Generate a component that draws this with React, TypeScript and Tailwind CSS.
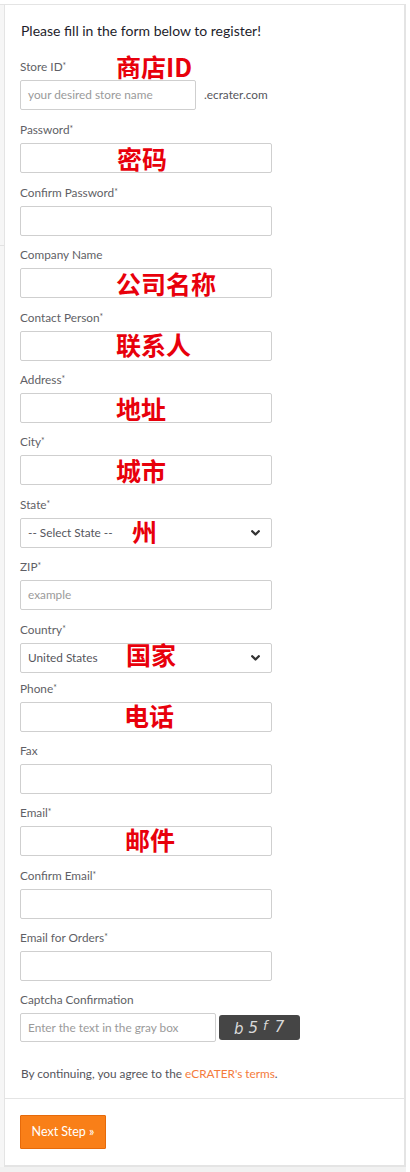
import React from "react";

type FieldProps = {
  label: string;
  req?: boolean;
  children: React.ReactNode;
  last?: string;
};

function Field({ label, req, children, last }: FieldProps) {
  return (
    <div className={last ?? "mb-[11.4px]"}>
      <div className="h-[16px] leading-[16px] text-[11.8px] text-[#5f5f66]">
        {label}
        {req ? <span className="align-top text-[8.5px] leading-[14px]">*</span> : null}
      </div>
      <div className="mt-[5px] relative">{children}</div>
    </div>
  );
}

function Note({ text, left, top }: { text: string; left: number; top: number }) {
  return (
    <span
      className="absolute z-10 whitespace-nowrap font-['Noto_Sans_CJK_SC',sans-serif] font-bold text-[25px] leading-none text-[#e8000b] pointer-events-none"
      style={{ left, top }}
    >
      {text}
    </span>
  );
}

function Input({ placeholder, w = "w-[252px]" }: { placeholder?: string; w?: string }) {
  return (
    <div
      className={`${w} h-[30px] border border-[#cfcfcf] rounded-[2px] bg-white flex items-center pl-[7px] text-[11.8px] text-[#9a9a9a]`}
    >
      {placeholder}
    </div>
  );
}

function Select({ value }: { value: string }) {
  return (
    <div className="w-[252px] h-[30px] border border-[#cfcfcf] rounded-[2px] bg-white flex items-center justify-between pl-[7px] pr-[11px] text-[11.8px] text-[#55555c]">
      <span>{value}</span>
      <svg width="9" height="6" viewBox="0 0 9 6">
        <path d="M1.2 1.2 L4.5 4.5 L7.8 1.2" fill="none" stroke="#333" strokeWidth="2.3" strokeLinecap="round" strokeLinejoin="round" />
      </svg>
    </div>
  );
}

export default function App() {
  return (
    <div className="w-[410px] h-[1172px] bg-white font-['Lato','Liberation_Sans',sans-serif] overflow-hidden">
      <div className="h-[4px]" />
      <div className="w-[406px] border-t border-[#e4e4e4] flex">
        <div className="w-[4px] bg-[#f6f6f6] flex flex-col">
          <div className="h-[240px]" />
          <div className="border-t border-[#e2e2e2]" />
        </div>
        <div className="w-[402px] bg-white border-l border-r-2 border-b-2 border-[#e4e4e4]">
          <div className="pt-[17px] pl-[15px] pr-[15px]">
            <div className="h-[18px] leading-[18px] text-[14px] text-[#1e1d2b] pl-[1px]">
              Please fill in the form below to register!
            </div>
            <div className="mt-[19px]">
              <Field label="Store ID" req last="mb-[12.4px]">
                <div className="flex items-center">
                  <Input placeholder="your desired store name" w="w-[176px]" />
                  <span className="ml-[8px] text-[11.8px] text-[#55555c]">.ecrater.com</span>
                </div>
                <Note text="商店ID" left={96} top={-26.5} />
              </Field>
              <Field label="Password" req>
                <Input />
                <Note text="密码" left={97} top={2.5} />
              </Field>
              <Field label="Confirm Password" req>
                <Input />
              </Field>
              <Field label="Company Name">
                <Input />
                <Note text="公司名称" left={96} top={2.5} />
              </Field>
              <Field label="Contact Person" req>
                <Input />
                <Note text="联系人" left={96} top={1.5} />
              </Field>
              <Field label="Address" req>
                <Input />
                <Note text="地址" left={96} top={3.5} />
              </Field>
              <Field label="City" req>
                <Input />
                <Note text="城市" left={96} top={2.5} />
              </Field>
              <Field label="State" req>
                <Select value="-- Select State --" />
                <Note text="州" left={112} top={1.5} />
              </Field>
              <Field label="ZIP" req>
                <Input placeholder="example" />
              </Field>
              <Field label="Country" req last="mb-[8px]">
                <Select value="United States" />
                <Note text="国家" left={106} top={-0.5} />
              </Field>
              <Field label="Phone" req>
                <Input />
                <Note text="电话" left={104} top={1.5} />
              </Field>
              <Field label="Fax">
                <Input />
              </Field>
              <Field label="Email" req>
                <Input />
                <Note text="邮件" left={105} top={0.5} />
              </Field>
              <Field label="Confirm Email" req>
                <Input />
              </Field>
              <Field label="Email for Orders" req>
                <Input />
              </Field>
              <Field label="Captcha Confirmation" last="mb-0">
                <div className="flex items-center">
                  <div className="w-[196px] h-[29px] border border-[#cfcfcf] rounded-[2px] bg-white flex items-center pl-[7px] text-[11.8px] text-[#9a9a9a]">
                    Enter the text in the gray box
                  </div>
                  <div className="ml-[3px] w-[81px] h-[25px] bg-[#454545] rounded-[3px] flex items-center pl-[15px] font-['DejaVu_Sans',sans-serif] italic text-[15px] text-[#d9d9d9] leading-none">
                    <span className="mt-[3px]">b</span>
                    <span className="ml-[5px] mt-[1px]">5</span>
                    <span className="ml-[5px] -mt-[4px] text-[13px]">f</span>
                    <span className="ml-[7px] -mt-[1px]">7</span>
                  </div>
                </div>
              </Field>
            </div>
            <div className="mt-[23px] h-[18px] leading-[18px] text-[11.8px] text-[#55555c] pl-[1px]">
              By continuing, you agree to the <span className="text-[#f47b3b]">eCRATER's terms</span>.
            </div>
          </div>
          <div className="mt-[15px] border-t border-[#e4e4e4]" />
          <div className="pt-[16px] pb-[16px] pl-[15px]">
            <div className="w-[86px] h-[34px] bg-[#f97f18] border border-[#e66a0a] rounded-[1px] flex items-center justify-center text-[12.5px] text-white">
              Next Step »
            </div>
          </div>
        </div>
      </div>
      <div className="w-[406px] h-[6px] bg-[#f1f1f1]" />
    </div>
  );
}
